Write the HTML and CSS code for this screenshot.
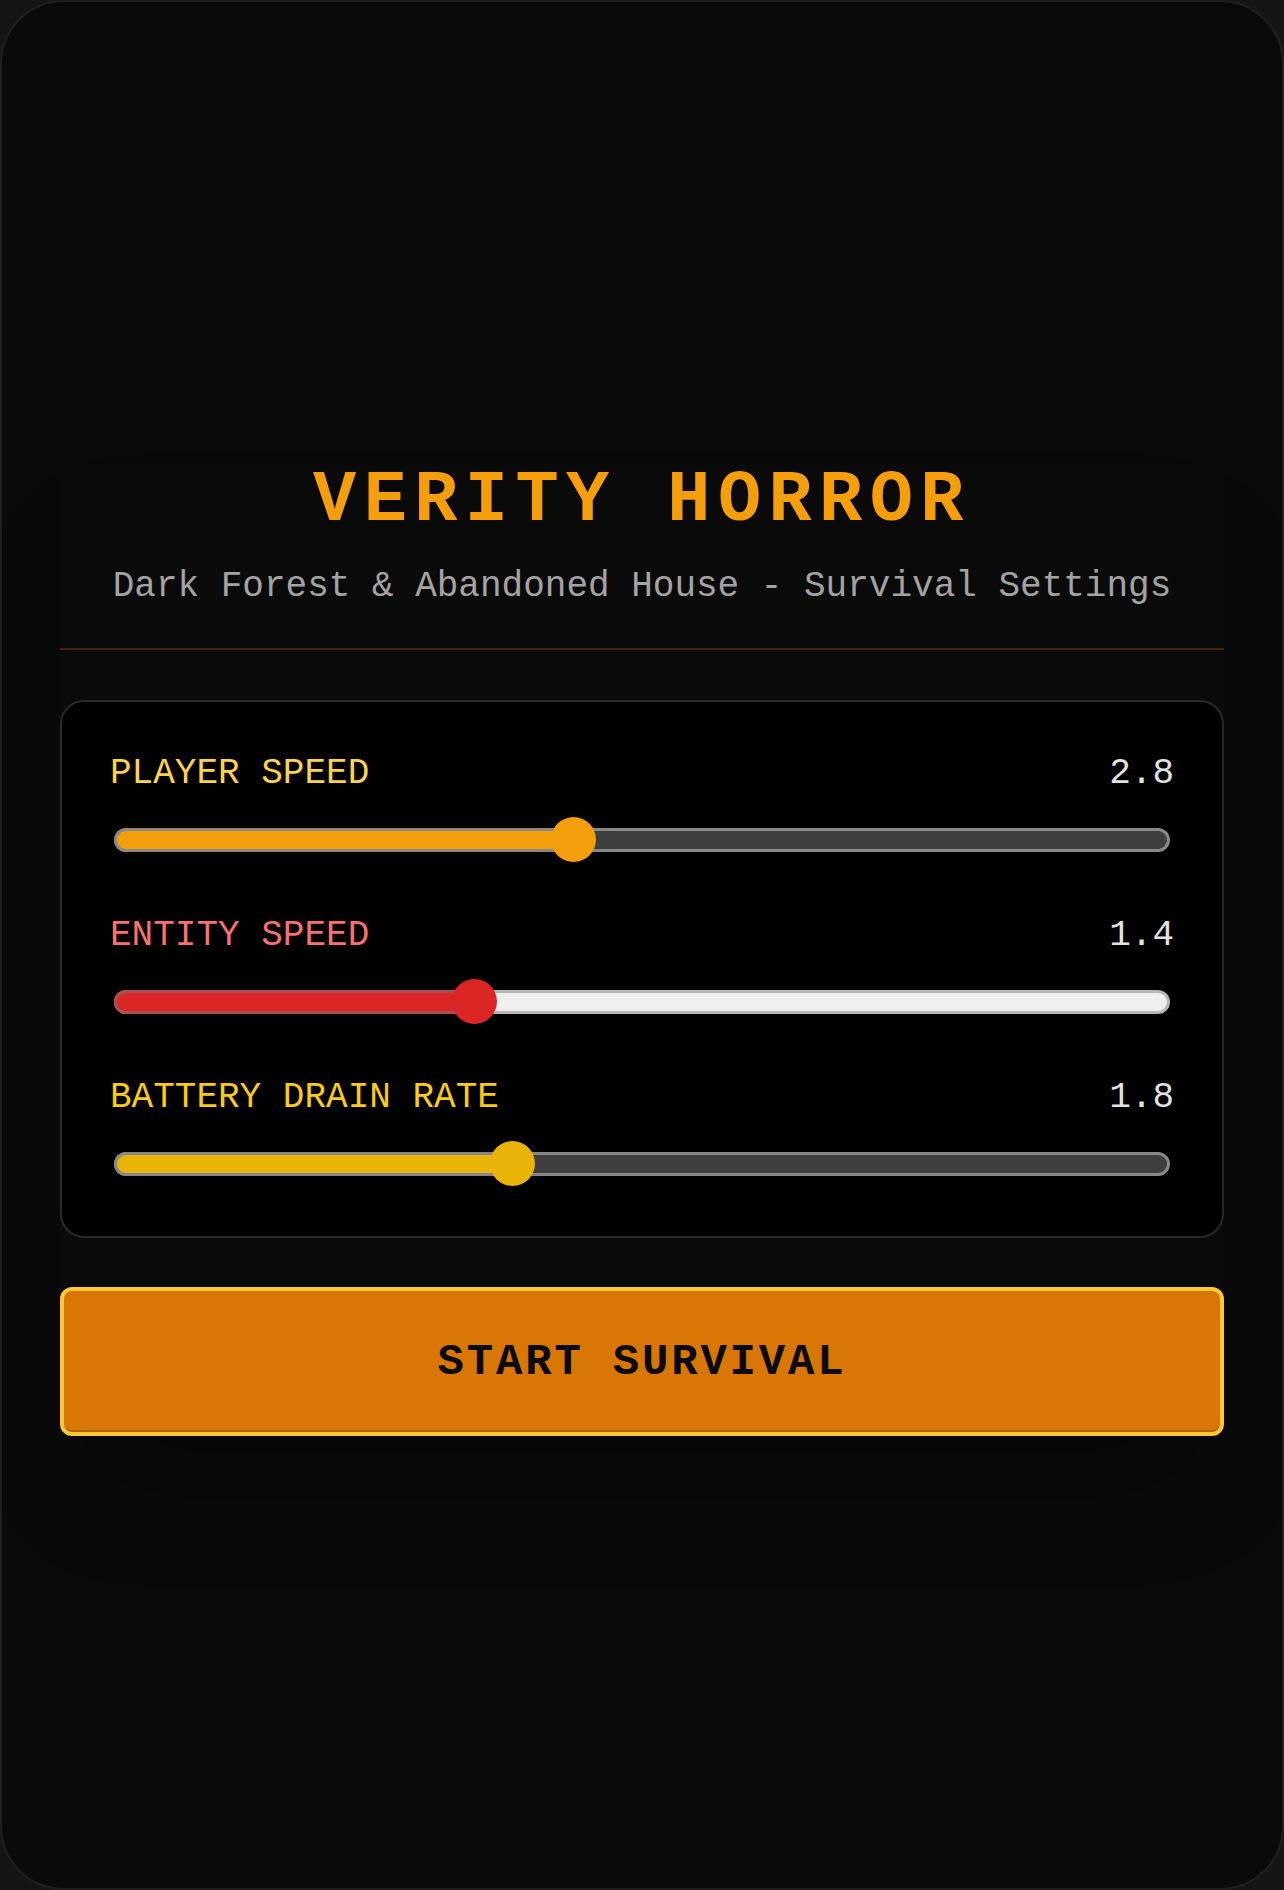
FILE: index.html
```html
<!DOCTYPE html>
<html lang="en">
<head>
<meta charset="utf-8">
<title>Verity Horror</title>
<link rel="stylesheet" href="styles.css">
</head>
<body>
<div class="frame">
  <div class="wrap">
    <h1 class="title">VERITY HORROR</h1>
    <p class="subtitle">Dark Forest &amp; Abandoned House - Survival Settings</p>
    <div class="divider"></div>
    <div class="panel">
      <div class="field field-player">
        <div class="field-head">
          <span class="label">PLAYER SPEED</span>
          <span class="value">2.8</span>
        </div>
        <div class="slider" style="--f:0.432">
          <div class="track"></div>
          <div class="fill"></div>
          <div class="thumb"></div>
        </div>
      </div>
      <div class="field field-entity">
        <div class="field-head">
          <span class="label">ENTITY SPEED</span>
          <span class="value">1.4</span>
        </div>
        <div class="slider" style="--f:0.334">
          <div class="track"></div>
          <div class="fill"></div>
          <div class="thumb"></div>
        </div>
      </div>
      <div class="field field-battery">
        <div class="field-head">
          <span class="label">BATTERY DRAIN RATE</span>
          <span class="value">1.8</span>
        </div>
        <div class="slider" style="--f:0.372">
          <div class="track"></div>
          <div class="fill"></div>
          <div class="thumb"></div>
        </div>
      </div>
    </div>
    <button class="start" type="button">START SURVIVAL</button>
  </div>
</div>
</body>
</html>
```
FILE: styles.css
```css
* {
  box-sizing: border-box;
}

html, body {
  margin: 0;
  padding: 0;
  background: #151515;
}

body {
  font-family: "Liberation Mono", "Courier New", "DejaVu Sans Mono", monospace;
}

.frame {
  width: 1284px;
  height: 1890px;
  background: #0b0a0b;
  border: 2px solid #1f1f1f;
  border-radius: 64px;
  padding: 463px 58px 0;
  overflow: hidden;
}

.wrap {
  display: flex;
  flex-direction: column;
  box-shadow: 0 70px 100px -30px rgba(0, 0, 0, 0.3);
}

.title {
  margin: 0;
  font-size: 72px;
  line-height: 72px;
  font-weight: 700;
  letter-spacing: 7.4px;
  color: #f59e0b;
  text-align: center;
}

.subtitle {
  margin: 30px 0 0;
  font-size: 36px;
  line-height: 40px;
  color: #a3a3a3;
  text-align: center;
}

.divider {
  margin-top: 41px;
  height: 2px;
  background: #4a2511;
}

.panel {
  margin-top: 50px;
  background: #000;
  border: 2px solid #292929;
  border-radius: 24px;
  padding: 48px 48px 50px;
  display: flex;
  flex-direction: column;
  gap: 49.7px;
}

.field-head {
  display: flex;
  justify-content: space-between;
  align-items: baseline;
  font-size: 36px;
  line-height: 48px;
}

.value {
  color: #e2e2e2;
}

.field-player .label { color: #fcd34d; }
.field-entity .label { color: #f87171; }
.field-battery .label { color: #facc15; }

.slider {
  position: relative;
  height: 45px;
  margin: 19.3px 4px 0;
  display: flex;
  align-items: center;
  --accent: #f59e0b;
  --track-bg: #3e3e3e;
  --track-border: #888888;
  --fill-border: #888888;
}

.field-entity .slider {
  --accent: #dc2626;
  --track-bg: #efefef;
  --track-border: #b6b6b6;
  --fill-border: #ab4e4e;
}

.field-battery .slider {
  --accent: #eab308;
}

.track {
  width: 100%;
  height: 24px;
  border-radius: 12px;
  background: var(--track-bg);
  border: 3px solid var(--track-border);
}

.fill {
  position: absolute;
  left: 0;
  top: 10.5px;
  height: 24px;
  width: calc(22.5px + var(--f) * (100% - 45px));
  background: var(--accent);
  border: 3px solid var(--fill-border);
  border-right: 0;
  border-radius: 12px 0 0 12px;
}

.thumb {
  position: absolute;
  top: 0;
  left: calc(var(--f) * (100% - 45px));
  width: 45px;
  height: 45px;
  border-radius: 50%;
  background: var(--accent);
}

.start {
  margin-top: 49px;
  height: 149px;
  width: 100%;
  background: #d97706;
  border: 4px solid #fcc83a;
  border-radius: 12px;
  box-shadow: inset 0 -2px 0 rgba(0, 0, 0, 0.18);
  font-family: "Liberation Mono", "Courier New", "DejaVu Sans Mono", monospace;
  font-size: 44px;
  font-weight: 700;
  letter-spacing: 2.8px;
  color: #0a0a0a;
  padding: 0;
  cursor: pointer;
}
```
